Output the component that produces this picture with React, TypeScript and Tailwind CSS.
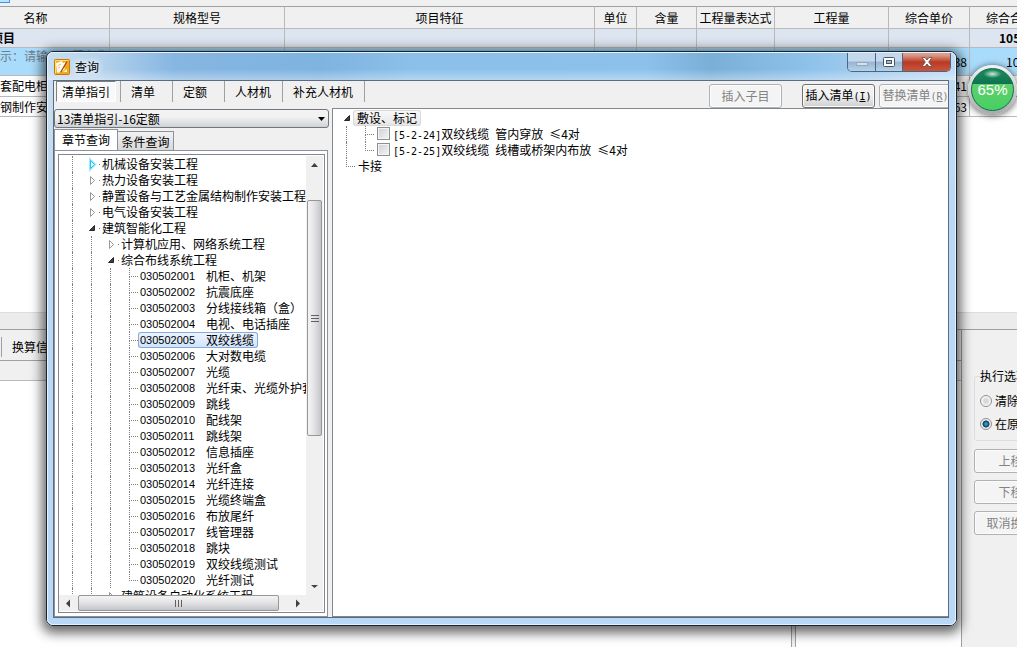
import type { ReactNode } from "react"

const columns = ["名称", "规格型号", "项目特征", "单位", "含量", "工程量表达式", "工程量", "综合单价", "综合合价"]

type Row = { depth: number; kind: "closed" | "open" | "leaf"; label: string; code?: string; hot?: boolean; last?: boolean }

const leaves: [string, string][] = [
  ["030502001", "机柜、机架"],
  ["030502002", "抗震底座"],
  ["030502003", "分线接线箱（盒）"],
  ["030502004", "电视、电话插座"],
  ["030502005", "双绞线缆"],
  ["030502006", "大对数电缆"],
  ["030502007", "光缆"],
  ["030502008", "光纤束、光缆外护套"],
  ["030502009", "跳线"],
  ["030502010", "配线架"],
  ["030502011", "跳线架"],
  ["030502012", "信息插座"],
  ["030502013", "光纤盒"],
  ["030502014", "光纤连接"],
  ["030502015", "光缆终端盒"],
  ["030502016", "布放尾纤"],
  ["030502017", "线管理器"],
  ["030502018", "跳块"],
  ["030502019", "双绞线缆测试"],
  ["030502020", "光纤测试"],
]

const rows: Row[] = [
  { depth: 1, kind: "closed", label: "机械设备安装工程", hot: true },
  { depth: 1, kind: "closed", label: "热力设备安装工程" },
  { depth: 1, kind: "closed", label: "静置设备与工艺金属结构制作安装工程" },
  { depth: 1, kind: "closed", label: "电气设备安装工程" },
  { depth: 1, kind: "open", label: "建筑智能化工程" },
  { depth: 2, kind: "closed", label: "计算机应用、网络系统工程" },
  { depth: 2, kind: "open", label: "综合布线系统工程" },
  ...leaves.map(([code, label], i): Row => ({ depth: 3, kind: "leaf", code, label, last: i === leaves.length - 1 })),
  { depth: 2, kind: "closed", label: "建筑设备自动化系统工程" },
]

const disabledButton =
  "h-6 shrink-0 rounded-[3px] border border-[#adb2b5] bg-[#f4f4f4] text-center leading-5 text-[#838383] shadow-[inset_0_0_0_1px_#fcfcfc]"

// Latin runs take half the width of a Chinese character
function Latin({ children }: { children: ReactNode }) {
  return <span className="whitespace-pre font-['DejaVu_Sans_Mono',monospace] text-[10px]">{children}</span>
}

function Guides({ count }: { count: number }) {
  return Array.from({ length: count }, (_, i) => (
    <span key={i} className="h-4 w-[19px] shrink-0 border-l border-dotted border-[#808080]" />
  ))
}

function Branch({ last }: { last?: boolean }) {
  return (
    <span className="flex h-4 w-[9px] shrink-0 flex-col">
      <span className="h-[9px] border-b border-l border-dotted border-[#808080]" />
      {!last && <span className="h-[7px] border-l border-dotted border-[#808080]" />}
    </span>
  )
}

function Expander({ open, hot }: { open?: boolean; hot?: boolean }) {
  return (
    <svg viewBox="0 0 15 16" className="-ml-1 h-4 w-[15px] shrink-0">
      {open ? (
        <path d="M7.5 5.5v5h-5z" fill="#404040" stroke="#262626" />
      ) : (
        <>
          {hot && <path d="M3.5 4.5l4 4-4 4z" fill="none" stroke="#9ee8fb" strokeWidth="3" />}
          <path d="M3.5 4.5l4 4-4 4z" fill="#fff" stroke={hot ? "#1cc4f7" : "#989898"} />
        </>
      )}
      <path d="M12 8h1v1h-1z" fill="#808080" />
    </svg>
  )
}

function TreeRow({ row }: { row: Row }) {
  const selected = row.code === "030502005"
  return (
    <li className="flex h-4 whitespace-nowrap pl-[13px]">
      <Guides count={row.depth} />
      {row.kind === "leaf" ? <Branch last={row.last} /> : <Expander open={row.kind === "open"} hot={row.hot} />}
      {row.code ? (
        <span
          className={
            selected
              ? "flex rounded-[3px] bg-linear-to-b from-[#eef5fd] to-[#cfe3fc] px-[2px] ring-1 ring-[#84acdd] ring-inset"
              : "flex px-[2px]"
          }
        >
          <span className="w-[66px] font-['Liberation_Sans',sans-serif] text-[11px] leading-4">{row.code}</span>
          <span className="pr-[2px]">{row.label}</span>
        </span>
      ) : (
        <span>{row.label}</span>
      )}
    </li>
  )
}

function Arrow({ d }: { d: string }) {
  return (
    <svg viewBox="0 0 17 17" className="size-[17px] shrink-0">
      <path d={d} fill="#404040" />
    </svg>
  )
}

function ChapterTree() {
  return (
    <div className="flex min-h-0 flex-1 flex-col border border-[#828790] bg-white py-px pr-px">
      <div className="flex min-h-0 flex-1">
        <ul className="min-w-0 flex-1 overflow-hidden">
          {rows.map((row) => (
            <TreeRow key={row.code ?? row.label} row={row} />
          ))}
        </ul>
        <div className="flex w-[17px] shrink-0 flex-col bg-[#f0f0f0]">
          <Arrow d="M8.5 7l3.5 4H5z" />
          <div className="h-[27px] shrink-0" />
          <div className="mx-px flex h-[236px] shrink-0 flex-col items-center justify-center gap-[2px] rounded-[2px] border border-[#979797] bg-linear-to-r from-[#f4f4f4] via-[#e2e2e4] to-[#c3c5c9]">
            <span className="h-px w-2 bg-[#606060]" />
            <span className="h-px w-2 bg-[#606060]" />
            <span className="h-px w-2 bg-[#606060]" />
          </div>
          <div className="flex-1" />
          <Arrow d="M8.5 10L12 7H5z" />
        </div>
      </div>
      <div className="flex h-4 shrink-0 bg-[#f0f0f0] pr-[17px]">
        <Arrow d="M7 8.5l4-4v8z" />
        <div className="ml-[2px] flex w-[201px] items-center justify-center gap-[2px] rounded-[2px] border border-[#979797] bg-linear-to-b from-[#f4f4f4] via-[#e2e2e4] to-[#c3c5c9]">
          <span className="h-[7px] w-px bg-[#606060]" />
          <span className="h-[7px] w-px bg-[#606060]" />
          <span className="h-[7px] w-px bg-[#606060]" />
        </div>
        <div className="flex-1" />
        <Arrow d="M11 8.5l-4-4v8z" />
      </div>
    </div>
  )
}

function QuotaItem({ code, label, last }: { code: string; label: string; last?: boolean }) {
  return (
    <li className="flex h-4 pl-[13px]">
      <Guides count={1} />
      <Branch last={last} />
      <label className="flex whitespace-nowrap">
        <input
          type="checkbox"
          className="mx-[3px] mt-px size-[13px] appearance-none border border-[#8e8f8f] bg-linear-to-br from-[#cbcfd5] to-[#f6f6f6] shadow-[inset_0_0_0_1px_#f4f4f4]"
        />
        <span className="flex items-baseline">
          <Latin>{code}</Latin>
          <span className="flex gap-[6px]">
            {label.split(" ").map((part) => (
              <span key={part}>{part}</span>
            ))}
          </span>
        </span>
      </label>
    </li>
  )
}

function TitleBar() {
  const button = "flex items-center justify-center border-r border-[#4c6580]"
  return (
    <div className="flex h-[27px] shrink-0 items-center justify-between bg-linear-to-b from-transparent from-60% to-white/35 pr-1 pl-[6px]">
      <div className="flex items-center gap-[5px]">
        <svg viewBox="0 0 16 16" className="size-4">
          <rect x=".5" y=".5" width="15" height="15" rx="1" fill="#f2a81c" stroke="#c87808" />
          <path d="M1.500 14.500v-13h13" fill="none" stroke="#ffdf70" />
          <path d="M2 4l6-2 1 2 3-1-2 5 1 2-4 3.500H3z" fill="#fffdf2" />
          <path d="M4 6.500l3-1.500M4 9l2-1" fill="none" stroke="#e7a24a" strokeWidth=".8" />
          <path d="M13 2.500L9.500 8.500l-3 5" fill="none" stroke="#a8480c" strokeWidth="1.400" />
          <path d="M9 13l4-3v3z" fill="#fff3c4" />
        </svg>
        <h1 className="[text-shadow:0_0_6px_#fff,0_0_8px_#fff]">查询</h1>
      </div>
      <div className="flex h-[19px] self-start overflow-hidden rounded-b-[5px] border border-t-0 border-[#4c6580]">
        <button aria-label="最小化" className={`${button} w-7 bg-linear-to-b from-[#c3d8ec] from-45% via-[#97b5d2] via-50% to-[#b5d2ea]`}>
          <svg viewBox="0 0 12 6" className="mt-1 h-[6px] w-3">
            <rect x=".5" y="1.500" width="11" height="3" fill="#d5e0ea" stroke="#93a8bd" />
          </svg>
        </button>
        <button aria-label="最大化" className={`${button} w-[27px] bg-linear-to-b from-[#c3d8ec] from-45% via-[#97b5d2] via-50% to-[#b5d2ea]`}>
          <svg viewBox="0 0 12 10" className="h-[10px] w-3">
            <rect x=".5" y=".5" width="11" height="9" rx="1" fill="#fff" stroke="#4a5666" />
            <rect x="3.500" y="3.500" width="5" height="3" fill="#9dbbd8" stroke="#4a5666" />
          </svg>
        </button>
        <button aria-label="关闭" className="flex w-[47px] items-center justify-center bg-linear-to-b from-[#dd9d8c] from-10% via-[#b93a24] via-50% to-[#c9543c]">
          <svg viewBox="0 0 12 10" className="h-[10px] w-3">
            <path d="M1 .5h3l2 2.500 2-2.500h3L7.700 5 11 9.500H8L6 7 4 9.500H1L4.300 5z" fill="#fff" stroke="#5c4a52" strokeWidth=".8" />
          </svg>
        </button>
      </div>
    </div>
  )
}

function QueryDialog() {
  return (
    <section
      aria-label="查询"
      className="absolute top-[51px] right-[60px] bottom-[21px] left-[46px] flex flex-col rounded-[7px] border border-[#1c232b] bg-[linear-gradient(90deg,#c9deef_0%,#b4d2ec_6%,#86b6e2_14%,#7fb3e0_30%,#8cc0ea_40%,#8dc1eb_66%,#7aafd8_73%,#8fc2ea_84%,#b6d5f1_96%,#c0dcf5_100%)] shadow-[0_3px_12px_4px_rgba(0,0,0,0.6)]"
    >
      <div className="flex min-h-0 flex-1 flex-col rounded-[6px] border border-[#e4f2ff] bg-[linear-gradient(transparent_70px,#b9d8f8_170px)]">
        <TitleBar />
        <div className="mr-[6px] mb-[6px] ml-[5px] flex min-h-0 flex-1 flex-col border border-[#5b6b80] bg-[#f0f0f0]">
          <div className="flex h-[27px] shrink-0 justify-between overflow-hidden">
            <nav className="flex h-[21px] whitespace-nowrap">
              <button className="mr-1 ml-[2px] border border-white border-t-[#808080] border-l-[#808080] bg-[#f9f9f9] px-[5px] leading-[18px]">
                清单指引
              </button>
              {["清单", "定额", "人材机", "补充人材机"].map((name) => (
                <button key={name} className="min-w-[52px] border-l border-[#a0a0a0] pr-[11px] pl-[10px] text-left leading-5 last:border-r">
                  {name}
                </button>
              ))}
            </nav>
            <div className="-mr-1 flex pt-[3px]">
              <button disabled className={`${disabledButton} w-[73px]`}>
                插入子目
              </button>
              <button className="ml-5 h-6 w-[73px] rounded-[3px] border border-[#707070] bg-linear-to-b from-[#f2f2f2] from-45% to-[#cfcfcf] leading-5 shadow-[inset_0_0_0_1px_#fcfcfc]">
                插入清单
                <Latin>
                  (<u>I</u>)
                </Latin>
              </button>
              <button disabled className={`${disabledButton} ml-1 w-[73px]`}>
                替换清单
                <Latin>
                  (<u>R</u>)
                </Latin>
              </button>
            </div>
          </div>

          <div className="flex min-h-0 flex-1 gap-[3px]">
            <div className="flex w-[275px] shrink-0 flex-col">
              <div className="relative mt-px h-[19px] shrink-0">
                <select
                  aria-label="定额库"
                  className="h-[19px] w-full appearance-none rounded-[3px] border border-[#707680] bg-linear-to-b from-[#f2f2f2] from-40% to-[#cfd2d4] pl-[2px] leading-4"
                >
                  <option>13清单指引-16定额</option>
                </select>
                <svg viewBox="0 0 7 4" className="pointer-events-none absolute top-2 right-1 h-1 w-[7px]">
                  <path d="M0 0h7L3.500 4z" />
                </svg>
              </div>
              <div className="mt-px flex h-[21px] shrink-0 items-end whitespace-nowrap">
                <button className="h-[21px] w-16 border border-b-0 border-[#8c919b] bg-white text-center leading-5">章节查询</button>
                <button className="h-[19px] w-14 border border-b-0 border-l-0 border-[#8c919b] bg-linear-to-b from-[#f2f2f2] to-[#d8d8d8] leading-[19px]">
                  条件查询
                </button>
              </div>
              <div className="mr-px flex min-h-0 flex-1 flex-col border border-[#8c919b] bg-white p-[3px] pr-[2px]">
                <ChapterTree />
              </div>
            </div>

            <ul className="min-w-0 flex-1 border border-r-0 border-[#828790] bg-white pt-px">
              <li className="flex h-4 pl-[13px]">
                <Expander open />
                <span className="-ml-1 rounded-[3px] bg-linear-to-b from-[#fafafa] to-[#e5e5e5] px-1 ring-1 ring-[#d9d9d9] ring-inset">
                  敷设、标记
                </span>
              </li>
              <QuotaItem code="[5-2-24]" label="双绞线缆 管内穿放 ≤4对" />
              <QuotaItem code="[5-2-25]" label="双绞线缆 线槽或桥架内布放 ≤4对" last />
              <li className="flex h-4 gap-[3px] pl-[13px]">
                <Branch last />
                卡接
              </li>
            </ul>
          </div>
        </div>
      </div>
    </section>
  )
}

function BillTable() {
  const cell = "overflow-hidden border-r border-b border-[#b9b9b9] p-0 whitespace-nowrap"
  const blanks = (n: number) => Array.from({ length: n }, (_, i) => <td key={i} className={cell} />)
  return (
    <table className="w-full min-w-[1051px] table-fixed border-separate border-spacing-0">
      <colgroup>
        <col className="w-[110px]" />
        <col className="w-[175px]" />
        <col />
        <col className="w-[42px]" />
        <col className="w-[60px]" />
        <col className="w-[78px]" />
        <col className="w-[114px]" />
        <col className="w-[81px]" />
        <col className="w-[81px]" />
      </colgroup>
      <thead>
        <tr className="h-[23px] bg-[#f0f0f0]">
          {columns.map((name, i) => (
            <th key={name} className={`${cell} border-t border-t-[#a0a0a0] font-normal ${i === 0 ? "pr-[38px]" : ""}`}>
              {name}
            </th>
          ))}
        </tr>
      </thead>
      <tbody>
        <tr className="h-[19px] bg-[#dde6f0] font-bold">
          <td className={cell}>
            <span className="-ml-[9px]">项目</span>
          </td>
          {blanks(7)}
          <td className={`${cell} pl-[29px]`}>105</td>
        </tr>
        <tr className="h-7 bg-[#a9dcfb]">
          <td className={`${cell} align-top text-[#6f7f8c]`}>示：请输入工程名称</td>
          {blanks(6)}
          <td className={`${cell} pr-[2px] text-right`}>38</td>
          <td className={`${cell} pl-9`}>10</td>
        </tr>
        <tr className="h-[21px]">
          <td className={cell}>套配电柜</td>
          {blanks(6)}
          <td className={`${cell} pr-[2px] text-right`}>41</td>
          {blanks(1)}
        </tr>
        <tr className="h-5">
          <td className={cell}>钢制作安</td>
          {blanks(6)}
          <td className={`${cell} pr-[2px] text-right`}>63</td>
          {blanks(1)}
        </tr>
      </tbody>
    </table>
  )
}

function Option({ label, checked }: { label: string; checked?: boolean }) {
  return (
    <label className="flex h-[23px] items-center gap-[3px]">
      <input
        type="radio"
        name="mode"
        defaultChecked={checked}
        className="size-3 shrink-0 appearance-none rounded-full border border-[#8e8f8f] bg-[radial-gradient(circle,#d6dadd_30%,#f6f6f6_60%)] checked:bg-[radial-gradient(circle,#2f9bd0_10%,#0f3a5c_45%,#f2f2f2_55%)]"
      />
      {label}
    </label>
  )
}

export default function App() {
  return (
    <main className="relative flex h-screen flex-col overflow-hidden bg-[#f0f0f0] font-['Noto_Sans_CJK_SC',sans-serif] text-xs text-black">
      <div className="flex h-[6px] shrink-0">
        <span className="h-[3px] w-[10px] border border-t-0 border-l-0 border-[#3399ff] bg-[#c2e0ff]" />
      </div>
      <div className="h-[306px] shrink-0 bg-white">
        <BillTable />
      </div>
      <div className="h-[17px] shrink-0 border-t border-[#dcdcdc] bg-[#ececec]" />

      <div className="flex min-h-0 flex-1 border-t border-[#a0a0a0]">
        <div className="flex min-w-0 flex-1 flex-col border-r border-[#a0a0a0]">
          <div className="flex h-[31px] shrink-0 items-center border-b border-[#a0a0a0] pt-1">
            <span className="ml-px h-5 border-l border-[#a0a0a0] pl-[10px] leading-5">换算信息</span>
          </div>
          <div className="h-5 shrink-0 border-b border-[#b9b9b9]" />
          <div className="flex flex-1 bg-white">
            <div className="flex-1" />
            <div className="w-[5px] border-x border-[#a0a0a0] bg-[#f0f0f0]" />
            <div className="w-[165px]" />
          </div>
        </div>
        <aside className="w-[55px] shrink-0 overflow-hidden pt-[38px] pl-3">
          <fieldset className="flex h-[73px] w-[80px] flex-col rounded-[3px] border border-[#d5dfe5] pl-[5px]">
            <legend className="leading-4 whitespace-nowrap">执行选项</legend>
            <div className="flex flex-col pt-[5px] whitespace-nowrap">
              <Option label="清除原有换算" />
              <Option label="在原有换算" checked />
            </div>
          </fieldset>
          <div className="mt-2 flex w-[73px] flex-col gap-[7px]">
            <button disabled className={disabledButton}>上移</button>
            <button disabled className={disabledButton}>下移</button>
            <button disabled className={disabledButton}>取消换算</button>
          </div>
        </aside>
      </div>

      <QueryDialog />

      {/* progress ball floats above every window */}
      <div className="absolute top-[65px] right-0 flex size-[49px] items-center justify-center rounded-full bg-linear-to-b from-[#f4f4f4] to-[#a6a8aa] shadow-[0_1px_6px_1px_rgba(0,0,0,0.55)]">
        <div className="flex size-[43px] items-center justify-center rounded-full border border-[#0b6f4d] bg-[radial-gradient(ellipse_9px_4px_at_50%_5px,#c8ecd9,transparent),linear-gradient(#1f8a5e_0,#0b7550_36%,#5fd06d_37%,#48cf62_100%)] font-['Liberation_Sans',sans-serif] text-[15px] leading-none text-white">
          65%
        </div>
      </div>
    </main>
  )
}
